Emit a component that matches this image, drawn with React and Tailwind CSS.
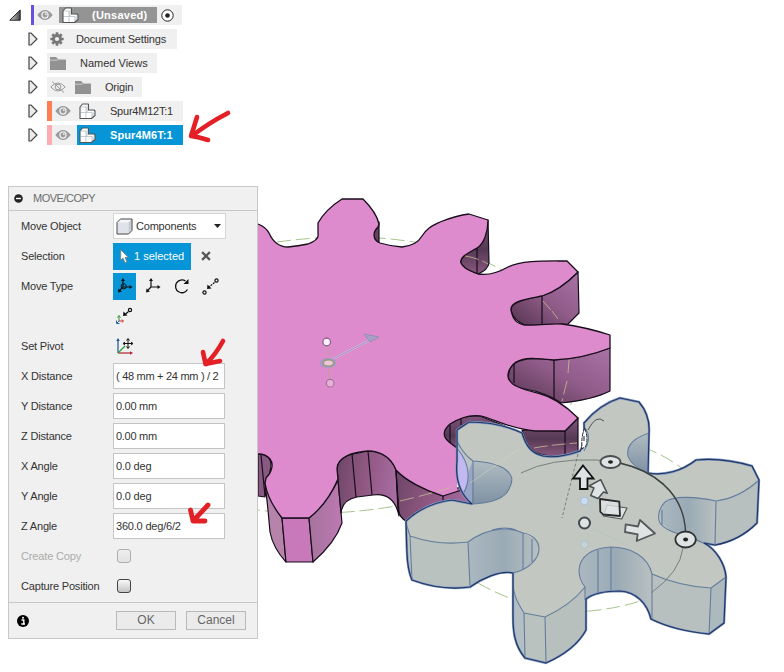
import React from "react";

const INK = "#170d1b";
const EDGE = "#647d9d";

const PINK_FACE =
  "M258 224 Q266 227 269 233 C273 242 279 247 288 247 Q298 246 308 244 C316 241 319 238 318 234 L318 223 C323 214 331 206 342 199 L363 199 C370 206 377 214 379 224 L378 227 C372 233 373 240 380 243 Q390 246 402 247 C412 246 418 243 422 236 C427 228 432 226 440 222 C450 218 460 215 469 214 L488 220 C488 232 484 244 477 248 C466 254 459 258 461 263 C464 270 474 272 478 274 C490 276 501 271 508 267 C522 260 545 261 567 261 L578 272 C566 284 552 293 542 296 C526 299 510 301 511 310 C513 320 517 324 525 325 C540 326 550 323 562 324 Q585 327 610 335 L610 348 C592 355 574 359 554 360 C535 358 525 357 516 362 C508 368 506 377 510 381 C514 388 530 391 538 393 C554 397 568 408 578 418 L565 431 L535 431 C512 429 495 420 485 417 C472 413 461 417 450 424 C442 431 443 437 449 442 Q453 446 457 448 L457 491 L443 496 C424 490 405 480 396 470 C391 457 380 451 368 451 C353 452 337 457 337 469 L338 479 C331 495 321 509 309 518 L282 518 C274 508 267 496 265 483 L266 478 C272 472 274 464 270 459 Q266 454 258 454 Z";

const GREY_FACE =
  "M406 521 C420 508 436 502 452 500 L472 504 C493 503 505 498 509 489 C514 479 512 475 506 470 C499 464 487 462 473 461 C464 455 458 444 457 430 L469 422 C489 422 507 426 522 433 C526 446 531 453 543 456 C554 458 569 455 580 451 C587 447 589 439 587 433 L584 423 C594 411 607 402 620 398 L639 402 C645 409 650 419 649 433 C634 438 626 446 628 456 C631 464 638 468 648 473 C664 476 682 471 696 460 C714 458 735 461 752 466 L759 480 C747 491 731 499 716 501 C697 497 674 495 665 502 C659 508 657 517 660 523 C667 533 685 534 703 543 C716 549 725 564 726 577 L711 588 C690 587 670 582 652 574 C648 556 630 547 611 547 C592 548 580 556 579 570 Q579 579 585 587 C575 600 562 609 545 617 L524 613 C517 602 511 591 513 573 C530 569 539 558 539 549 C539 540 531 534 523 533 C509 526 486 528 468 542 Q439 546 410 536 Z";

const GREY_OUTLINE =
  "M406 521 C420 508 436 502 452 500 L472 504 C460 494 455 481 457 461 L457 430 L469 422 C489 422 507 426 522 433 C526 446 531 453 543 456 C554 458 569 455 580 451 Q585 445 584 423 C594 411 607 402 620 398 L639 402 C645 409 650 419 649 433 L648 473 C664 476 682 471 696 460 C714 458 735 461 752 466 L759 480 L757 523 C745 535 732 542 715 545 L704 543 C716 549 725 564 726 577 L724 623 L709 634 C689 632 667 627 651 619 C647 603 636 592 620 591 Q596 591 586 599 L586 630 C578 645 564 655 546 663 L525 658 C514 645 513 630 513 617 L513 573 C500 570 481 579 470 587 C448 590 428 586 412 580 C406 566 407 549 406 521 Z";

function Gears() {
  return (
    <svg className="col-start-1 row-start-1 block" width="784" height="672" viewBox="0 0 784 672" fill="none" strokeLinejoin="round">
      <defs>
        <linearGradient id="wall" x1="0" y1="0" x2="1" y2="0.15">
          <stop offset="0" stopColor="#6d4568" /><stop offset=".45" stopColor="#8d567f" /><stop offset="1" stopColor="#a76ba0" />
        </linearGradient>
        <linearGradient id="bay" x1="0" y1="0" x2="0" y2="1">
          <stop offset="0" stopColor="#80557b" /><stop offset=".55" stopColor="#563954" /><stop offset="1" stopColor="#89577f" />
        </linearGradient>
        <linearGradient id="flank" x1="0" y1="0" x2="1" y2="0">
          <stop offset="0" stopColor="#a5739d" /><stop offset="1" stopColor="#bd79b2" />
        </linearGradient>
        <linearGradient id="right" x1="0" y1="1" x2="1" y2="0">
          <stop offset="0" stopColor="#53334f" /><stop offset=".5" stopColor="#8f5b88" /><stop offset="1" stopColor="#aa73a6" />
        </linearGradient>
        <linearGradient id="steel" x1="0" y1="0" x2="0" y2="1">
          <stop offset="0" stopColor="#b0bcc2" /><stop offset="1" stopColor="#7f91a3" />
        </linearGradient>
        <linearGradient id="steelSide" x1="0" y1="0" x2="1" y2="0">
          <stop offset="0" stopColor="#abb8c0" /><stop offset=".5" stopColor="#9aaab5" /><stop offset="1" stopColor="#b8c0c1" />
        </linearGradient>
      </defs>

      <g stroke="#a7c58c" strokeWidth="1" strokeDasharray="14 5">
        <path d="M258 245 Q345 230 420 243 Q540 262 572 355 Q586 398 548 440 Q500 490 390 507 Q320 518 258 510" />
        <path d="M478 583 Q530 613 590 611 Q650 605 680 580 M625 443 Q656 448 684 470" />
      </g>

      <g stroke={INK} strokeWidth="1.2">
        <path d="M379 222 L379 243 Q371 237 374 231 Z" fill="#64435f" />
        <path d="M488 220 L489 263 Q488 270 478 274 Q469 274 461 264 Q459 256 475 249 Q488 236 488 220 Z" fill="url(#bay)" />
        <path d="M578 272 L579 313 L568 324 Q540 326 525 325 Q511 319 511 308 Q515 300 542 296 Q563 288 578 272 Z" fill="url(#right)" />
        <path d="M610 348 L610 391 Q592 400 561 403 Q548 393 525 389 Q503 386 510 369 Q516 355 554 360 Q582 359 610 348 Z" fill="url(#right)" />
        <path d="M578 418 L578 452 Q552 460 535 452 Q525 446 522 430 L565 431 Z" fill="url(#bay)" />
        <path d="M443 430 Q455 415 480 416 L505 426 L470 452 Q451 449 443 435 Z" fill="url(#bay)" />
        <path d="M258 454 Q271 453 271 466 L265 497 L258 496 Z" fill="#885a82" />
        <path d="M265 482 Q272 505 282 518 L286 562 Q273 548 270 532 L268 510 Z" fill="#b683ab" />
        <path d="M282 518 H309 L313 562 H286 Z" fill="#c779ba" />
        <path d="M309 518 Q328 502 338 480 L342 523 Q335 543 313 562 Z" fill="url(#flank)" />
        <path d="M338 480 L337 469 Q338 457 353 454 L368 451 Q390 449 396 470 L399 516 Q394 492 373 495 L357 497 Q342 500 341 513 Z" fill="url(#wall)" />
        <path d="M396 470 Q410 485 443 496 L457 488 L472 486 L476 505 L452 500 Q426 504 406 521 Q400 518 398 510 Z" fill="url(#wall)" />
      </g>

      <path d={PINK_FACE} fill="#dd8bcd" />
      <path
        d="M258 224 Q266 227 269 233 C273 242 279 247 288 247 Q298 246 308 244 C316 241 319 238 318 234 V223 C323 214 331 206 342 199 H363 C370 206 377 214 379 224 L378 227 C372 233 373 240 380 243 Q390 246 402 247 C412 246 418 243 422 236 C427 228 432 226 440 222 C450 218 460 215 469 214 L488 220 C488 232 484 244 477 248 C466 254 459 258 461 263 C464 270 474 272 478 274 C490 276 501 271 508 267 C522 260 545 261 567 261 L578 272 C566 284 552 293 542 296 C526 299 510 301 511 310 C513 320 517 324 525 325 C540 326 550 323 562 324 Q585 327 610 335 V348 C592 355 574 359 554 360 C535 358 525 357 516 362 C508 368 506 377 510 381 C514 388 530 391 538 393 C554 397 568 408 578 418 L565 431 H535 C512 429 495 420 485 417 C472 413 461 417 450 424 C442 431 443 437 449 442 L457 448 M468 488 L443 496 C424 490 405 480 396 470 C391 457 380 451 368 451 C353 452 337 457 337 469 L338 479 C331 495 321 509 309 518 H282 C274 508 267 496 265 483 L266 478 C272 472 274 464 270 459 Q266 454 258 454"
        stroke={INK} strokeWidth="1.3"
      />
      <path d="M261 455 L265 496 M352 454 L356 497 M368 451 L372 495 M396 470 L399 513 M443 496 V502 M477 248 V273 M542 296 V325 M554 360 V399 M514 364 V383 M565 431 V454 M450 425 V443 M461 418 V425" stroke={INK} strokeWidth="1.2" />
      <g stroke="#c5bd92" strokeWidth="1" opacity=".8">
        <path d="M465 256 Q478 258 488 264 M543 301 L551 310 M552 311 L558 319 M569 360 L568 373 M567 381 L562 401 M534 448 Q550 445 577 443" strokeDasharray="14 4" />
        <path d="M400 501 Q430 494 455 486" strokeDasharray="14 5" />
      </g>

      <path d={GREY_OUTLINE} fill="#bcc5c3" />
      <path d="M457 448 Q467 458 468 474 Q469 486 463 494 Q457 486 457 461 Z" fill="#c3b9f1" />
      <path d="M463 494 Q469 484 469 470 L473 461 L472 504 Z" fill="#98a5c7" />
      <path d="M472 461 Q514 464 512 480 Q508 504 472 504 Z" fill="url(#steel)" />
      <path d="M649 433 Q626 443 628 453 Q629 463 648 473 Z" fill="url(#steel)" />
      <path d="M716 501 Q668 491 661 510 Q654 531 703 543 L715 545 Z" fill="url(#steelSide)" />
      <path d="M716 501 Q744 497 759 480 L757 523 Q741 542 715 545 Z" fill="#b7c0bf" />
      <path d="M652 574 Q681 586 711 588 L709 634 Q674 631 651 619 Z" fill="#b7c0be" />
      <path d="M711 588 L726 577 L724 623 L709 634 Z" fill="#adbabd" />
      <path d="M652 574 Q646 546 611 547 Q577 551 579 571 L585 587 L586 599 Q596 591 620 591 Q643 593 651 619 Z" fill="url(#steelSide)" />
      <path d="M410 536 Q439 546 468 542 L470 587 Q441 592 412 580 Z" fill="#bac2bf" />
      <path d="M468 542 Q492 523 523 533 Q540 541 539 550 Q535 568 513 573 Q493 571 470 587 Z" fill="url(#steelSide)" />
      <path d="M524 613 L545 617 L546 663 L525 658 Z" fill="#bac2bf" />
      <path d="M545 617 Q571 606 585 587 L586 630 Q573 653 546 663 Z" fill="#b8c0be" />
      <path d="M513 573 Q510 594 524 613 L525 658 Q513 643 513 617 Z" fill="#b3bfc5" />
      <path d={GREY_FACE} fill="#c2c7c1" />
      <path d="M472 504 C493 503 505 498 509 489 C514 479 512 475 506 470 C499 464 487 462 473 461 C464 455 458 444 457 440 M473 461 V504 M457 448 Q468 462 468 473 Q469 484 463 494 M649 433 C634 438 626 446 628 456 C631 464 638 468 648 473 M759 480 C747 491 731 499 716 501 C697 497 674 495 665 502 C659 508 657 517 660 523 C667 533 685 534 703 543 M716 501 L715 545 M662 510 V525 M726 577 L711 588 C690 587 670 582 652 574 C648 556 630 547 611 547 C592 548 580 556 579 570 Q579 579 585 587 C575 600 562 609 545 617 L524 613 C517 602 511 591 513 573 C530 569 539 558 539 549 C539 540 531 534 523 533 C509 526 486 528 468 542 Q439 546 410 536 L406 523 M410 536 L412 580 M468 542 L470 587 M523 533 V569 M532 539 V562 M524 613 L525 658 M545 617 L546 663 M585 587 V600 M598 550 V594 M611 547 V591 M652 574 V619 M711 588 L709 634 M492 530 Q505 526 516 530" stroke={EDGE} strokeWidth="1.1" />
      <path d={GREY_OUTLINE} stroke="#7f98c8" strokeWidth="2.4" />
      <path d={GREY_OUTLINE} stroke="#22365f" strokeWidth="1.2" />

      <g stroke="#778078" strokeWidth="1">
        <path d="M470 483 L519 449" stroke="#d4dbbc" opacity=".5" />
        <path d="M521 473 Q550 458 597 460 Q640 463 664 484 M683 548 Q680 572 651 593" />
        <path d="M620 463 C650 470 684 490 685.500 532" stroke="#3b4140" strokeWidth="1.4" />
        <path d="M578 454 L562 518" strokeDasharray="3 2" />
        <path d="M588 430 Q596 414 604 421" stroke="#555" />
        <path d="M593 529 L627 545" stroke="#aebfc3" opacity=".5" />
        <path d="M586 519 L594 497" stroke="#b4cbd6" opacity=".7" />
      </g>

      <path d="M329 361 L370 340" stroke="#ddd3f1" strokeWidth="1.6" />
      <path d="M329 361 L370 340" stroke="#9290bb" strokeWidth="1" />
      <path d="M364 334 L379 337 L370 342 Z" fill="#aaa0c7" stroke="#958eb6" />
      <path d="M328 345 V356 M329 369 V378" stroke="#b7a68e" />
      <ellipse cx="328" cy="363" rx="8.5" ry="5" fill="#a89ac4" />
      <ellipse cx="328.500" cy="363" rx="5.2" ry="3.2" fill="#f0c6d7" stroke="#8f9b79" strokeWidth="1.4" />
      <circle cx="326.7" cy="342" r="3.8" fill="#fff0ff" stroke="#7e5f7f" strokeWidth="1.2" />
      <circle cx="330.2" cy="383.2" r="3.8" fill="#e9afd9" stroke="#a1789d" strokeWidth="1.2" />

      <g fill="#e0e3e4" stroke="#292c2e" strokeWidth="1.8">
        <path d="M583 465.5 L593.500 478.500 H587.5 V489 H580 V478.500 H573 Z" stroke="#111" strokeLinejoin="miter" />
        <path d="M600.7 479.7 L607.3 493.3 L603.500 492 L598 498.500 L590.7 495.500 L594 488 L589 486 Z" stroke="#4b5053" strokeWidth="1.5" />
        <path d="M607 505 L627 508 L621.7 519 L603.3 516 Z" stroke="#555" strokeWidth="1.2" />
        <path d="M600 499 L619.3 501.7 L620 516 L603 514.500 L600.3 511.7 Z" fillOpacity=".8" />
        <path d="M625.7 524.3 L638 526.500 L640 520 L655 533.500 L636.7 541 L637.7 534.3 L625 532 Z" stroke="#55595b" />
        <ellipse cx="610.5" cy="462" rx="10" ry="6" stroke="#4b4e50" />
        <ellipse cx="685.6" cy="539.5" rx="10.2" ry="8" stroke="#303334" />
        <circle cx="584.5" cy="523" r="5.5" stroke="#414a50" strokeWidth="2" />
      </g>
      <ellipse cx="610.5" cy="462" rx="2.5" ry="1.7" fill="#222" />
      <ellipse cx="685.6" cy="539.5" rx="2.5" ry="2" fill="#222" />
      <circle cx="584.4" cy="501" r="3.8" fill="#c9def6" stroke="#a9c0d4" />
      <circle cx="584.4" cy="544.5" r="3.8" fill="#c4d2d6" stroke="#b0c1c8" />
      <path d="M585 428 Q581 435 582 449 L586 446 Q588 439 586 432 Z" fill="#fff" stroke="#18202d" strokeDasharray="4 1" />
      <path d="M584 436 V441" stroke="#18202d" />
      <path d="M586 429 Q592 439 584 451" stroke="#5d7899" />
    </svg>
  );
}

function Expander() {
  return (
    <svg width="10" height="14" viewBox="0 0 10 14" className="mr-[9px] shrink-0">
      <path d="M1 1 H3 L9 7 L3 13 H1 Z" fill="#ececec" stroke="#444" strokeWidth="1.2" />
    </svg>
  );
}

function Eye({ off }) {
  return (
    <svg width="16" height="12" viewBox="0 0 16 12" className="shrink-0">
      {off ? (
        <g fill="none" stroke="#999" strokeWidth="1">
          <path d="M.8 6 Q8 -2 15.2 6 Q8 14 .8 6 Z" />
          <circle cx="8" cy="6" r="2.8" />
          <path d="M2 .5 L14 11.5" />
        </g>
      ) : (
        <g>
          <path d="M.3 6 Q8 -4 15.7 6 Q8 16 .3 6 Z" fill="#999" />
          <circle cx="8" cy="6" r="3.7" fill="#eee" />
          <circle cx="8" cy="6" r="2.4" fill="#999" />
          <circle cx="8.8" cy="5.2" r=".9" fill="#eee" />
        </g>
      )}
    </svg>
  );
}

function Component() {
  return (
    <svg width="17" height="17" viewBox="0 0 17 17" className="shrink-0" strokeLinejoin="round">
      <path d="M1 4 L3.5 1 H9.5 V7 H14.500 L16 8 V12.5 L12.5 15.5 H1 Z" fill="#fff" />
      <path d="M7 4 L9.500 1.500 V7 L7 9 Z M13 10 L15.500 8 V12.500 L12.500 15 Z" fill="#dde1e4" />
      <path d="M1.500 4 H7 V15 M1.500 9.500 H13 V15 M7 9.500 L9.500 7" fill="none" stroke="#b9c0c5" strokeWidth=".8" />
      <path d="M1 4 L3.5 1 H9 L9.500 1.500 V7 H15 L16 8 V12.5 L12.5 15.5 H1 Z" fill="none" stroke="#555" strokeWidth="1.1" />
    </svg>
  );
}

function Folder() {
  return (
    <svg width="16" height="13" viewBox="0 0 16 13" className="shrink-0">
      <path d="M0 0 H6 L8 2 H16 V13 H0 Z" fill="#929292" />
      <path d="M0 3.2 H7 L8.5 2.4 H16" fill="none" stroke="#ccc" />
    </svg>
  );
}

function Gear() {
  return (
    <svg width="14" height="14" viewBox="-7 -7 14 14" className="shrink-0">
      <circle r="3.5" fill="none" stroke="#777" strokeWidth="2.8" />
      <path d="M0 -6.7 V-4 M0 6.7 V4 M-6.7 0 H-4 M6.7 0 H4 M-4.7 -4.7 L-3 -3 M4.7 4.7 L3 3 M4.7 -4.7 L3 -3 M-4.7 4.7 L-3 3" stroke="#777" strokeWidth="2.7" />
    </svg>
  );
}

function Browser() {
  return (
    <div className="w-[240px] pt-[3px] text-[11px] text-[#333]">
      <div className="flex h-6 items-center pl-[9px]">
        <svg width="12" height="12" viewBox="0 0 12 12"><defs><linearGradient id="tri"><stop stopColor="#ddd" /><stop offset="1" stopColor="#444" /></linearGradient></defs><path d="M.8 11.2 L11.2 1 V11.2 Z" fill="url(#tri)" stroke="#222" /></svg>
        <div className="ml-[10px] flex h-5 w-[151px] items-center bg-[#f0f0f0]">
          <div className="mr-[3px] h-5 w-[3px] bg-[#6650df]" />
          <Eye />
          <div className="ml-[6px] flex h-4 w-[98px] items-center bg-[#949494] pl-[3px]">
            <Component />
            <span className="ml-[13px] font-bold tracking-[0.25px] text-white">(Unsaved)</span>
          </div>
          <svg width="13" height="13" viewBox="0 0 13 13" className="ml-1"><circle cx="6.5" cy="6.5" r="5.7" fill="#fff" stroke="#222" /><circle cx="6.5" cy="6.5" r="2.3" fill="#222" /></svg>
        </div>
      </div>
      <div className="flex h-6 items-center pl-[28px]">
        <Expander />
        <div className="flex h-5 w-[130px] items-center bg-[#f0f0f0] pl-[3px]"><Gear /><span className="ml-[12px] whitespace-nowrap tracking-[-0.17px]">Document Settings</span></div>
      </div>
      <div className="flex h-6 items-center pl-[28px]">
        <Expander />
        <div className="flex h-5 w-[110px] items-center bg-[#f0f0f0] pl-[3px]"><Folder /><span className="ml-[14px]">Named Views</span></div>
      </div>
      <div className="flex h-6 items-center pl-[28px]">
        <Expander />
        <div className="flex h-5 w-[95px] items-center bg-[#f0f0f0] pl-[3px]"><Eye off /><span className="w-[9px]" /><Folder /><span className="ml-[14px] tracking-[-0.2px]">Origin</span></div>
      </div>
      <div className="flex h-6 items-center pl-[28px]">
        <Expander />
        <div className="flex h-5 w-[136px] items-center bg-[#f0f0f0]"><div className="mr-[3px] h-5 w-[5px] bg-[#ff7e54]" /><Eye /><span className="w-2" /><Component /><span className="ml-[14px] tracking-[-0.22px]">Spur4M12T:1</span></div>
      </div>
      <div className="flex h-6 items-center pl-[28px]">
        <Expander />
        <div className="flex h-5 w-[136px] items-center bg-[#f0f0f0]"><div className="mr-[3px] h-5 w-[5px] bg-[#ffabb3]" /><Eye /><div className="ml-[6px] flex h-5 w-[106px] items-center bg-[#0696d7] pl-[2px]"><Component /><span className="ml-[14px] font-bold tracking-[0.1px] text-white">Spur4M6T:1</span></div></div>
      </div>
    </div>
  );
}

function Row({ label, muted, children }) {
  return (
    <div className="flex h-[30px] items-center pl-[12px]">
      <span className={muted ? "w-[92px] whitespace-nowrap tracking-[-0.15px] text-[#acacac]" : "w-[92px] whitespace-nowrap tracking-[-0.18px]"}>{label}</span>
      {children}
    </div>
  );
}

function Field({ children, tight }) {
  return (
    <div className="flex h-[26px] w-[112px] items-center whitespace-nowrap border border-[#c5c5c5] bg-white pl-[2px]">
      <span className={tight ? "tracking-[-0.29px]" : "tracking-[-0.2px]"}>{children}</span>
    </div>
  );
}

function Triad({ free }) {
  return (
    <svg width="16" height="16" viewBox="0 0 16 16">
      <path d="M6 2 V9 H14 M6 9 L2 13" fill="none" stroke="#111" strokeWidth="1.2" />
      <path d="M6 0 L8 3 H4 Z M15.5 9 L12.5 7 V11 Z M1 14.5 L1.5 10.5 L5 13.5 Z" fill="#111" />
      {free && <circle cx="6.7" cy="8.3" r="2.6" fill="none" stroke="#111" />}
    </svg>
  );
}

function PointToPoint() {
  return (
    <svg width="17" height="17" viewBox="0 0 17 17">
      <circle cx="14.5" cy="2.5" r="1.6" fill="none" stroke="#111" strokeWidth="1.2" />
      <circle cx="2.5" cy="14.5" r="1.6" fill="none" stroke="#111" strokeWidth="1.2" />
      <path d="M12.500 4.500 L7 9" stroke="#111" strokeWidth="1.2" strokeDasharray="2 1" /><path d="M5 11 L5.500 6.500 L9.5 10.5 Z" fill="#111" />
    </svg>
  );
}

function CheckBox({ muted }) {
  return <div className={muted ? "ml-[4px] size-[14px] rounded-[3px] border border-[#b0b0b0] bg-gradient-to-b from-[#eee] to-[#e2e2e2]" : "ml-[4px] size-[14px] rounded-[3px] border border-[#444] bg-gradient-to-b from-[#fafafa] to-[#c4c4c4]"} />;
}

function MoveDialog() {
  return (
    <div className="ml-[8px] mt-[39px] flex h-[453px] w-[250px] flex-col border border-[#c8c8c8] bg-[#f0f0f0] text-[11px] text-[#333]">
      <div className="flex h-[24px] items-center border-b border-[#c8c8c8] pl-[5px] text-[#6d6d6d]">
        <svg width="9" height="9" viewBox="0 0 9 9"><circle cx="4.5" cy="4.5" r="4.3" fill="#222" /><path d="M2 4.5 H7" stroke="#fff" strokeWidth="1.4" /></svg>
        <span className="ml-[10px] tracking-[-0.5px]">MOVE/COPY</span>
      </div>
      <Row label="Move Object">
        <div className="flex h-[26px] w-[113px] items-center border border-[#d5d5d5] bg-white pl-[2px]">
          <svg width="17" height="17" viewBox="0 0 17 17"><path d="M1 4.5 L4.5 1 H16 V12.5 L12.5 16 H1 Z" fill="#f5f6f8" /><path d="M1.5 4.5 H12.5 V15.5 H1.500 Z" fill="#dfe2e8" /><path d="M12.500 4.500 L15.500 1.500 V12 L12.500 15.500 Z" fill="#c6cad1" /><path d="M1 4.5 L4.5 1 H16 V12.5 L12.5 16 H1 Z" fill="none" stroke="#444" strokeLinejoin="round" /></svg>
          <span className="ml-[3px] tracking-[-0.2px]">Components</span>
          <svg width="7" height="4" viewBox="0 0 7 4" className="ml-auto mr-[4px]"><path d="M0 0 H7 L3.5 4 Z" fill="#222" /></svg>
        </div>
      </Row>
      <Row label="Selection">
        <div className="flex h-[27px] w-[78px] items-center bg-[#0696d7] pl-[7px] text-white">
          <svg width="9" height="15" viewBox="0 0 9 15"><path d="M.7 .7 V11.3 L3 9 L5 13.8 L7 13 L5 8.5 H8.3 Z" fill="#fff" stroke="#777" strokeWidth=".8" /></svg>
          <span className="ml-[5px] whitespace-nowrap">1 selected</span>
        </div>
        <svg width="10" height="10" viewBox="0 0 9 9" className="ml-[10px]"><path d="M1 1 L8 8 M8 1 L1 8" stroke="#555" strokeWidth="2" /></svg>
      </Row>
      <Row label="Move Type">
        <div className="flex h-[27px] w-[23px] items-center justify-center bg-[#0696d7]"><Triad free /></div>
        <div className="ml-[9px]"><Triad /></div>
        <svg width="17" height="17" viewBox="0 0 17 17" className="ml-[12px]"><path d="M12.5 3 A6.4 6.4 0 1 0 14.5 11.5" fill="none" stroke="#111" strokeWidth="1.3" /><path d="M15.5 1 V6 H10.5 Z" fill="#111" /></svg>
        <div className="ml-[12px]"><PointToPoint /></div>
      </Row>
      <Row label="">
        <svg width="18" height="18" viewBox="0 0 18 18" className="ml-[3px]">
          <circle cx="14" cy="3" r="1.6" fill="none" stroke="#111" strokeWidth="1.2" /><path d="M12.5 4.5 L9 7.5" stroke="#111" strokeWidth="1.2" /><path d="M7 9 L7.500 4.500 L11.500 8.5 Z" fill="#111" />
          <path d="M3 14 V9 M1.5 10.5 L3 8.5 L4.5 10.5" stroke="#289728" fill="none" /><path d="M3 14 H7 M6 12.5 L7.5 14 L6 15.5" stroke="#cf2929" fill="none" /><path d="M3 14 L1 16 M.5 13.5 V16.5 H3.5" stroke="#1769b5" fill="none" />
        </svg>
      </Row>
      <Row label="Set Pivot">
        <svg width="18" height="18" viewBox="0 0 18 18" className="ml-[3px]">
          <path d="M2 16 V2" stroke="#17569a" strokeWidth="1.2" /><path d="M.3 4 L2 1 L3.7 4 Z" fill="#17569a" /><path d="M2 16 H15" stroke="#b32232" strokeWidth="1.2" /><path d="M17 16 L14 14.3 V17.7 Z" fill="#b32232" /><path d="M2 16 L9 9" stroke="#31a136" strokeWidth="1.2" />
          <path d="M12 2 V11 M7.5 6.5 H16.5 M10.5 3.5 L12 1.5 L13.5 3.5 M10.5 9.5 L12 11.5 L13.5 9.5 M9 5 L7 6.5 L9 8 M15 5 L17 6.5 L15 8" fill="none" stroke="#111" />
        </svg>
      </Row>
      <Row label="X Distance"><Field tight>( 48 mm + 24 mm ) / 2</Field></Row>
      <Row label="Y Distance"><Field tight>0.00 mm</Field></Row>
      <Row label="Z Distance"><Field tight>0.00 mm</Field></Row>
      <Row label="X Angle"><Field>0.0 deg</Field></Row>
      <Row label="Y Angle"><Field>0.0 deg</Field></Row>
      <Row label="Z Angle"><Field>360.0 deg/6/2</Field></Row>
      <Row label="Create Copy" muted><CheckBox muted /></Row>
      <Row label="Capture Position"><CheckBox /></Row>
      <div className="mt-auto flex h-[36px] items-center border-t border-[#c8c8c8] pl-[8px] pr-[11px]">
        <svg width="12" height="12" viewBox="0 0 12 12"><circle cx="6" cy="6" r="6" fill="#000" /><path d="M4.5 5 H6.8 V9 M4.3 9 H8" fill="none" stroke="#fff" strokeWidth="1.4" /><circle cx="6" cy="2.7" r="1" fill="#fff" /></svg>
        <button className="ml-auto h-[19px] w-[60px] border border-[#b9b9b9] bg-[#ebebeb] text-[12px] leading-[17px] text-[#666]">OK</button>
        <button className="ml-[10px] h-[19px] w-[60px] border border-[#b9b9b9] bg-[#ebebeb] text-[12px] leading-[17px] text-[#666]">Cancel</button>
      </div>
    </div>
  );
}

export default function App() {
  return (
    <main className="relative grid h-[672px] w-[784px] overflow-hidden bg-white font-['Liberation_Sans',Arial,sans-serif]">
      <Gears />
      <div className="z-10 col-start-1 row-start-1 w-[260px]">
        <Browser />
        <MoveDialog />
      </div>
      <svg className="pointer-events-none absolute inset-0 z-20" width="784" height="672" viewBox="0 0 784 672" fill="none" stroke="#e32025" strokeWidth="4.6" strokeLinecap="round" strokeLinejoin="round">
        <path d="M228 113 Q207 124 192 136 M197 117 Q194 127 191 136 Q199 137 208 140" />
        <path d="M223 341 Q216 354 206 364 M203 352 L205.500 364 L220 361" />
        <path d="M208 505 L193 521 M190.500 510 L193 521 L205 521" strokeWidth="4.8" />
      </svg>
    </main>
  );
}
